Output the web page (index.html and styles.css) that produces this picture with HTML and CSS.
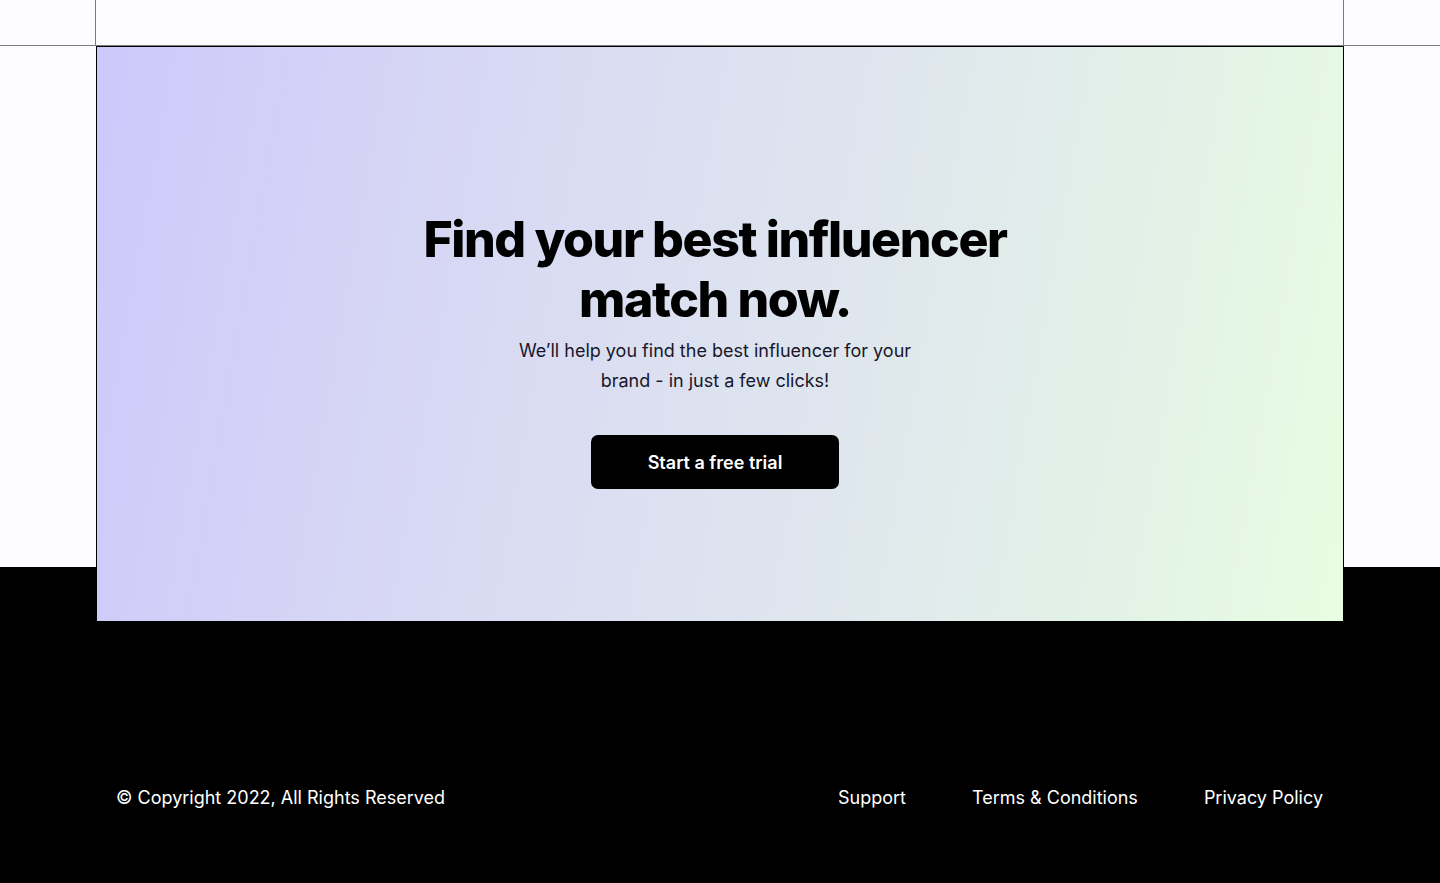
FILE: index.html
```html
<!DOCTYPE html>
<html lang="en">
<head>
<meta charset="utf-8">
<title>Find your best influencer</title>
<link rel="stylesheet" href="styles.css">
</head>
<body>
<section class="hero">
  <div class="topbar">
    <div class="topbar-frame"></div>
  </div>
  <div class="cta-card">
    <h1 class="cta-title">Find your best influencer<br>match now.</h1>
    <p class="cta-text">We’ll help you find the best influencer for your<br>brand - in just a few clicks!</p>
    <a class="cta-button" href="#">Start a free trial</a>
  </div>
</section>
<footer class="footer">
  <div class="footer-inner">
    <p class="copyright">© Copyright 2022, All Rights Reserved</p>
    <nav class="footer-links">
      <a href="#">Support</a>
      <a href="#">Terms &amp; Conditions</a>
      <a href="#">Privacy Policy</a>
    </nav>
  </div>
</footer>
</body>
</html>
```

FILE: styles.css
```css
* { box-sizing: border-box; }

html, body {
  margin: 0;
  padding: 0;
}

body {
  background: #fcfbff;
  font-family: Inter, "Liberation Sans", sans-serif;
  color: #000;
}

.hero {
  height: 567px;
  background: #fcfbff;
}

.topbar {
  height: 46px;
  border-bottom: 1px solid #7a7a7a;
}

.topbar-frame {
  margin-left: 95px;
  width: 1249px;
  height: 45px;
  border-left: 1px solid #7a7a7a;
  border-right: 1px solid #7a7a7a;
}

.cta-card {
  position: relative;
  z-index: 1;
  margin-left: 96px;
  width: 1248px;
  height: 575px;
  border: 1px solid #000;
  border-bottom: none;
  background: linear-gradient(100deg, #cec8fb 0%, #d9dbf3 35%, #dfe6ee 60%, #e3f4e6 85%, #e9fde2 100%);
  display: flex;
  flex-direction: column;
  align-items: center;
  padding-top: 162px;
  padding-right: 10px;
}

.cta-title {
  margin: 0;
  font-size: 50px;
  line-height: 60px;
  font-weight: 800;
  letter-spacing: -1.4px;
  text-align: center;
  color: #000;
}

.cta-text {
  margin: 7px 0 0;
  font-size: 18px;
  line-height: 30px;
  text-align: center;
  color: #17172a;
}

.cta-button {
  margin-top: 39px;
  width: 248px;
  height: 54px;
  border-radius: 7px;
  background: #000;
  color: #fff;
  font-size: 18px;
  font-weight: 600;
  text-decoration: none;
  display: flex;
  align-items: center;
  justify-content: center;
}

.footer {
  background: #000;
  height: 316px;
  padding-top: 217px;
}

.footer-inner {
  margin-left: 96px;
  width: 1248px;
  padding: 0 21px 0 20px;
  display: flex;
  justify-content: space-between;
  align-items: center;
  color: #fff;
  font-size: 18px;
  line-height: 27px;
}

.copyright {
  margin: 0;
}

.footer-links {
  display: flex;
  gap: 66px;
}

.footer-links a {
  color: #fff;
  text-decoration: none;
}
```
